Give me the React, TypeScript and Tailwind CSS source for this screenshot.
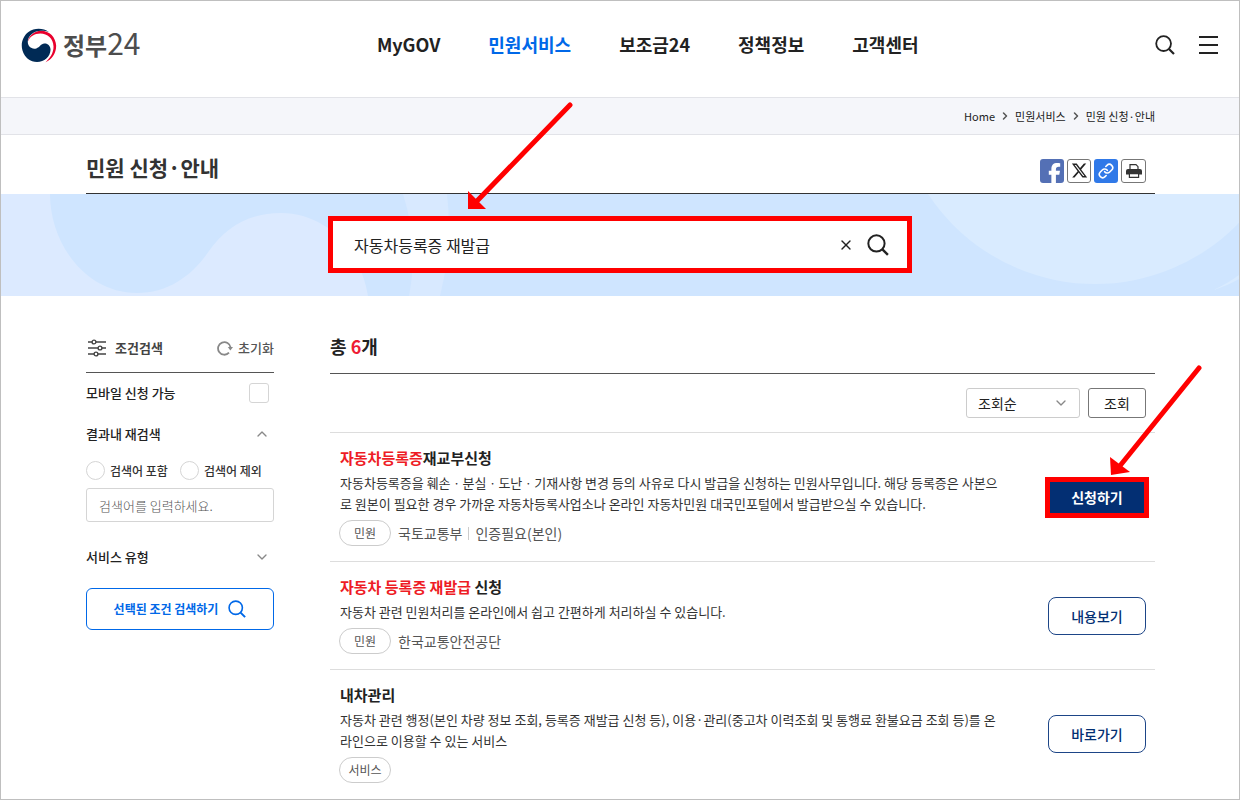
import React from "react";
import { ChevronDown, ChevronRight, ChevronUp, Link, X } from "lucide-react";
import { FaFacebookF, FaXTwitter } from "react-icons/fa6";

type IconProps = { className?: string };

type Service = {
  title: React.ReactNode;
  description: string;
  tag: string;
  meta: string[];
  action: string;
  highlighted?: boolean;
};

const menu = ["MyGOV", "민원서비스", "보조금24", "정책정보", "고객센터"];

const services: Service[] = [
  {
    title: (
      <>
        <span className="text-[#ee1c25]">자동차등록증</span>재교부신청
      </>
    ),
    description:
      "자동차등록증을 훼손ㆍ분실ㆍ도난ㆍ기재사항 변경 등의 사유로 다시 발급을 신청하는 민원사무입니다. 해당 등록증은 사본으\n로 원본이 필요한 경우 가까운 자동차등록사업소나 온라인 자동차민원 대국민포털에서 발급받으실 수 있습니다.",
    tag: "민원",
    meta: ["국토교통부", "인증필요(본인)"],
    action: "신청하기",
    highlighted: true,
  },
  {
    title: (
      <>
        <span className="text-[#ee1c25]">자동차 등록증 재발급</span> 신청
      </>
    ),
    description:
      "자동차 관련 민원처리를 온라인에서 쉽고 간편하게 처리하실 수 있습니다.",
    tag: "민원",
    meta: ["한국교통안전공단"],
    action: "내용보기",
  },
  {
    title: "내차관리",
    description:
      "자동차 관련 행정(본인 차량 정보 조회, 등록증 재발급 신청 등), 이용·관리(중고차 이력조회 및 통행료 환불요금 조회 등)를 온\n라인으로 이용할 수 있는 서비스",
    tag: "서비스",
    meta: [],
    action: "바로가기",
  },
];

const SearchIcon: React.FC<IconProps> = ({ className }) => (
  <svg viewBox="0 0 20 20" fill="none" className={className} aria-hidden="true">
    <circle cx="8.6" cy="8.6" r="7.4" stroke="currentColor" strokeWidth="1.8" />
    <path d="M14 14l5 5" stroke="currentColor" strokeWidth="2.2" />
  </svg>
);

const FilterIcon: React.FC<IconProps> = ({ className }) => (
  <svg
    viewBox="0 0 18 18"
    fill="none"
    stroke="currentColor"
    strokeWidth="1.4"
    className={className}
    aria-hidden="true"
  >
    <path d="M0 3h4M8 3h10M0 9h10M14 9h4M0 15h6M10 15h8" />
    <circle cx="6" cy="3" r="1.9" />
    <circle cx="12" cy="9" r="1.9" />
    <circle cx="8" cy="15" r="1.9" />
  </svg>
);

const ResetIcon: React.FC<IconProps> = ({ className }) => (
  <svg viewBox="0 0 16 16" fill="none" className={className} aria-hidden="true">
    <path
      d="M12 12.7A6.3 6.3 0 1 1 13.6 7.5"
      stroke="currentColor"
      strokeWidth="1.8"
    />
    <path d="M10.8 7h5.2l-2.6 3.6z" fill="currentColor" />
  </svg>
);

const PrintIcon: React.FC<IconProps> = ({ className }) => (
  <svg viewBox="0 0 16 16" className={className} aria-hidden="true">
    <path
      d="M4 6V1.7h6L12 3.7V6"
      fill="none"
      stroke="currentColor"
      strokeWidth="1.2"
    />
    <path
      d="M2 6h12a2 2 0 0 1 2 2v3.5h-3.2V10H3.2v1.5H0V8a2 2 0 0 1 2-2z"
      fill="currentColor"
    />
    <path
      d="M3.4 10.6h9.2v3.8H3.4z"
      fill="white"
      stroke="currentColor"
      strokeWidth="1.2"
    />
  </svg>
);

const Logo: React.FC = () => (
  <a href="#" className="flex items-center gap-[6px]">
    <svg viewBox="0 0 108 106" className="h-[35px] w-[36px]" aria-hidden="true">
      <path
        d="M20 42C22 24 40 8 60 8c26 0 45 20 46 46 0 24-14 42-32 50 14-14 24-28 24-48-1-24-18-39-40-39-18 0-32 9-38 25z"
        fill="#e9002d"
      />
      <path
        d="M84 12C66-1 40-1 22 12 4 26-2 48 4 68c6 22 24 35 44 35 22 0 40-15 41-37 0-12-9-20-19-19s-14 11-24 15c-14 4-26-6-26-20C20 22 40 8 60 8c10 0 18 1 24 4z"
        fill="#002a55"
      />
    </svg>
    <span className="flex items-baseline pb-1 text-2xl leading-8 font-bold text-[#4d4d4d]">
      정부<span className="text-[30px] font-normal">24</span>
    </span>
  </a>
);

const Header: React.FC = () => (
  <header className="flex h-24 items-center justify-between pr-[21px] pb-2 pl-5">
    <Logo />
    <nav className="flex gap-12 pb-[3px] text-lg font-bold">
      {menu.map((item) => (
        <a
          key={item}
          href="#"
          className={item === "민원서비스" ? "text-[#0068e8]" : "text-[#222]"}
        >
          {item}
        </a>
      ))}
    </nav>
    <div className="flex items-center gap-6 text-[#222]">
      <button type="button" aria-label="검색">
        <SearchIcon className="size-5" />
      </button>
      <button
        type="button"
        aria-label="전체메뉴"
        className="flex h-[18px] w-[19px] flex-col justify-between"
      >
        <span className="h-[2px] w-full bg-[#222]" />
        <span className="h-[2px] w-full bg-[#222]" />
        <span className="h-[2px] w-full bg-[#222]" />
      </button>
    </div>
  </header>
);

const Breadcrumb: React.FC = () => (
  <nav
    aria-label="현재 위치"
    className="flex h-[38px] items-center justify-end gap-1 border-y border-[#e2e3e8] bg-[#f5f6fa] pr-[84px] text-[11px] text-[#222]"
  >
    <a href="#">Home</a>
    <ChevronRight className="size-3 text-[#555]" strokeWidth={3} />
    <a href="#">민원서비스</a>
    <ChevronRight className="size-3 text-[#555]" strokeWidth={3} />
    <a href="#">민원 신청·안내</a>
  </nav>
);

const TitleBar: React.FC = () => (
  <div className="pr-[84px] pl-[85px]">
    <div className="flex h-[59px] items-center justify-between border-b border-[#333] pt-[14px] pr-[9px] pb-[1px]">
      <h1 className="pb-2 text-[21px] leading-8 font-bold text-[#333]">
        민원 신청·안내
      </h1>
      <div className="flex gap-[3px]">
        <button
          type="button"
          aria-label="페이스북"
          className="flex size-6 items-end justify-end rounded-[3px] bg-[#5470b5] pr-[3px] text-white"
        >
          <FaFacebookF className="h-5 w-[13px]" />
        </button>
        <button
          type="button"
          aria-label="X"
          className="flex size-6 items-center justify-center rounded-[3px] border border-[#777] text-[#222]"
        >
          <FaXTwitter className="size-[17px]" />
        </button>
        <button
          type="button"
          aria-label="주소 복사"
          className="flex size-6 items-center justify-center rounded-[3px] bg-[#3079e8] text-white"
        >
          <Link className="size-4" strokeWidth={2.4} />
        </button>
        <button
          type="button"
          aria-label="인쇄"
          className="flex h-6 w-[25px] items-center justify-center rounded-[3px] border border-[#777] text-[#333]"
        >
          <PrintIcon className="size-4" />
        </button>
      </div>
    </div>
  </div>
);

const SearchBanner: React.FC = () => (
  <section className="relative bg-[#dceaff] pt-[22px] pb-[23px]">
    <svg
      viewBox="0 0 1238 102"
      preserveAspectRatio="xMidYMid slice"
      className="absolute inset-0 h-full w-full"
      aria-hidden="true"
    >
      <path
        d="M49 0c0 50 36 99 87 99 31 0 55-17 72-42 17-24 40-38 72-38 44 0 79 35 87 83H1238V0z"
        fill="#cfe5ff"
      />
      <path d="M402 0q16 50 6 102h31q13-50 7-102z" fill="#d8e9ff" />
      <circle cx="1094" cy="-110" r="200" fill="#d9ebff" />
      <path d="M1212 96q14-6 26-15v4q-12 7-26 11z" fill="#d9ebff" />
    </svg>
    <form
      className="relative mx-auto flex h-[57px] w-[584px] max-w-full items-center border-[5px] border-[#ff0000] bg-white pr-[18px] pl-[21px] text-[#222]"
      onSubmit={(e) => e.preventDefault()}
    >
      <input
        type="text"
        aria-label="검색어"
        defaultValue="자동차등록증 재발급"
        className="min-w-0 flex-1 text-base text-[#222] outline-none"
      />
      <button type="button" aria-label="지우기" className="mr-[13px]">
        <X className="size-4" />
      </button>
      <button type="submit" aria-label="검색">
        <SearchIcon className="size-[22px]" />
      </button>
      {/* pointer to the search box */}
      <svg
        viewBox="0 0 106 108"
        className="pointer-events-none absolute bottom-[58px] left-[135px] h-[108px] w-[106px]"
        aria-hidden="true"
      >
        <path
          d="M102 3L9 99"
          stroke="#ff0000"
          strokeWidth="5"
          strokeLinecap="round"
        />
        <path d="M0 89v18h18z" fill="#ff0000" />
      </svg>
    </form>
  </section>
);

const Sidebar: React.FC = () => (
  <aside className="w-[188px] shrink-0 text-[13px] text-[#222]">
    <div className="flex h-10 items-center justify-between border-b border-[#555] pb-[9px]">
      <h2 className="flex items-center gap-[9px] pl-[2px] font-bold text-[#444]">
        <FilterIcon className="size-[18px]" />
        조건검색
      </h2>
      <button
        type="button"
        className="flex items-center gap-[5px] font-medium text-[#555]"
      >
        <ResetIcon className="size-4 text-[#888]" />
        초기화
      </button>
    </div>
    <div className="flex h-10 items-center justify-between pr-[5px]">
      <label htmlFor="mobile" className="font-medium">
        모바일 신청 가능
      </label>
      <input
        id="mobile"
        type="checkbox"
        className="size-5 appearance-none rounded-[3px] border border-[#d5d5d5] bg-white checked:bg-[#0068e8]"
      />
    </div>
    <button
      type="button"
      className="flex h-[42px] w-full items-center justify-between pr-1 font-medium"
    >
      결과내 재검색
      <ChevronUp className="size-4 text-[#888]" />
    </button>
    <div className="flex h-[33px] items-center gap-3 pb-[2px] text-xs font-medium text-[#333]">
      {["검색어 포함", "검색어 제외"].map((option) => (
        <label key={option} className="flex items-center gap-[5px]">
          <input
            type="radio"
            name="range"
            className="size-[19px] appearance-none rounded-full border border-[#d5d5d5] bg-white checked:bg-[#0068e8]"
          />
          {option}
        </label>
      ))}
    </div>
    <input
      type="text"
      aria-label="결과내 검색어"
      placeholder="검색어를 입력하세요."
      className="block h-[34px] w-full rounded-[3px] border border-[#d5d5d5] px-3 font-light placeholder:text-[#555]"
    />
    <button
      type="button"
      className="mt-4 flex h-[38px] w-full items-center justify-between pr-1 font-medium"
    >
      서비스 유형
      <ChevronDown className="size-4 text-[#888]" />
    </button>
    <button
      type="button"
      className="mt-3 flex h-[42px] w-full items-center justify-center gap-[10px] rounded-md border border-[#0068e8] text-xs font-bold text-[#0068e8]"
    >
      선택된 조건 검색하기
      <SearchIcon className="size-[18px]" />
    </button>
  </aside>
);

const ServiceItem: React.FC<{ service: Service }> = ({ service }) => (
  <li className="flex items-center justify-between border-t border-[#ddd]">
    <div className="min-w-0 pt-[13px] pb-[15px] pl-[10px]">
      <h3 className="text-[15px] leading-6 font-bold text-[#222]">
        {service.title}
      </h3>
      <p className="mt-[2px] text-[13px] leading-[21px] whitespace-pre-line text-[#333]">
        {service.description}
      </p>
      <div className="mt-[6px] flex items-center text-sm leading-5 text-[#555]">
        <span className="-ml-px mr-[7px] flex h-[26px] w-[52px] items-center justify-center rounded-full border border-[#ccc] text-xs">
          {service.tag}
        </span>
        {service.meta.map((text, i) => (
          <React.Fragment key={text}>
            {i > 0 && <span className="mx-[6px] h-[13px] w-px bg-[#ccc]" />}
            <span>{text}</span>
          </React.Fragment>
        ))}
      </div>
    </div>
    <div className="flex w-[116px] shrink-0 justify-center text-sm">
      {service.highlighted ? (
        <div className="relative">
          <button
            type="button"
            className="h-[41px] w-[104px] border-[5px] border-[#ff0000] bg-[#032f73] font-bold text-white"
          >
            {service.action}
          </button>
          {/* pointer to the apply button */}
          <svg
            viewBox="0 0 92 112"
            className="pointer-events-none absolute bottom-[42px] left-[65px] h-[112px] w-[92px]"
            aria-hidden="true"
          >
            <path
              d="M89 4L9 103"
              stroke="#ff0000"
              strokeWidth="5"
              strokeLinecap="round"
            />
            <path d="M0 93l1 18 19-3z" fill="#ff0000" />
          </svg>
        </div>
      ) : (
        <button
          type="button"
          className="h-[38px] w-[98px] rounded-lg border border-[#1d4587] font-medium text-[#032f73]"
        >
          {service.action}
        </button>
      )}
    </div>
  </li>
);

const Results: React.FC = () => (
  <main className="min-w-0 flex-1">
    <h2 className="h-[41px] border-b border-[#555] text-lg leading-[26px] font-bold text-[#222]">
      총 <span className="text-[#ee1c35]">6</span>개
    </h2>
    <div className="flex justify-end gap-2 py-[14px] pr-[9px] text-sm text-[#222]">
      <div className="relative">
        <select
          aria-label="정렬"
          className="h-[30px] w-[114px] appearance-none rounded-[3px] border border-[#ccc] bg-white px-[11px]"
        >
          <option>조회순</option>
        </select>
        <ChevronDown className="pointer-events-none absolute top-[7px] right-[11px] size-4 text-[#888]" />
      </div>
      <button
        type="button"
        className="h-[30px] w-[58px] rounded-[3px] border border-[#777]"
      >
        조회
      </button>
    </div>
    <ul>
      {services.map((service) => (
        <ServiceItem key={service.action} service={service} />
      ))}
    </ul>
  </main>
);

const App: React.FC = () => {
  return (
    <div className="min-h-screen border border-[#bfbfbf] bg-white font-['Noto_Sans_CJK_KR','Noto_Sans',sans-serif]">
      <Header />
      <Breadcrumb />
      <TitleBar />
      <SearchBanner />
      <div className="flex gap-14 pt-[37px] pr-[84px] pl-[85px]">
        <Sidebar />
        <Results />
      </div>
    </div>
  );
};

export default App;
